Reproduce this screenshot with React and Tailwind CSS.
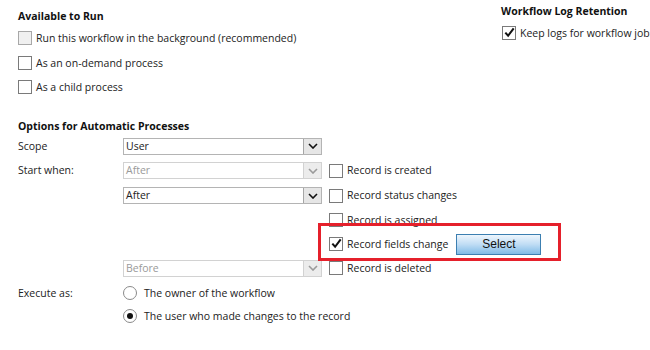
import React from "react";

const font = { fontFamily: '"Open Sans", "Noto Sans", sans-serif' };

function Check({ checked, disabled }) {
  return (
    <span
      className={`relative inline-block w-[14px] h-[14px] shrink-0 border ${
        disabled ? "border-[#a8a8a8] bg-[#f0f0f0]" : "border-[#7a7a7a] bg-white"
      }`}
    >
      {checked && (
        <svg viewBox="0 0 14 14" className="absolute left-[0px] top-[-1px] w-[13px] h-[13px]">
          <path d="M2.5 7.2 L5.5 10.5 L11.5 2.5" fill="none" stroke="#111" strokeWidth="2.2" />
        </svg>
      )}
    </span>
  );
}

function CheckRow({ label, checked, disabled, className = "" }) {
  return (
    <div className={`flex items-center gap-[4px] ${className}`}>
      <Check checked={checked} disabled={disabled} />
      <span className="text-[10.5px] text-[#222] leading-none whitespace-nowrap">{label}</span>
    </div>
  );
}

function Select({ value, disabled }) {
  return (
    <div
      className={`flex items-stretch w-[199px] h-[17px] border ${
        disabled ? "border-[#d2d2d2]" : "border-[#b4b4b4]"
      } bg-white`}
    >
      <span
        className={`flex-1 flex items-center pl-[2px] text-[10.5px] leading-none ${
          disabled ? "text-[#9a9a9a]" : "text-[#222]"
        }`}
      >
        {value}
      </span>
      <span
        className={`w-[18px] flex items-center justify-center border-l ${
          disabled ? "border-[#d2d2d2] bg-[#ececec]" : "border-[#a6a6a6] bg-[#e6e6e6]"
        }`}
      >
        <svg viewBox="0 0 10 6" className="w-[10px] h-[6px]">
          <path d="M1 1 L5 5 L9 1" fill="none" stroke={disabled ? "#9a9a9a" : "#111"} strokeWidth="1.6" />
        </svg>
      </span>
    </div>
  );
}

function Radio({ checked, label }) {
  return (
    <div className="flex items-center gap-[7px]">
      <span className="w-[14px] h-[14px] rounded-full border border-[#8a8a8a] bg-white flex items-center justify-center">
        {checked && <span className="w-[6px] h-[6px] rounded-full bg-[#111]" />}
      </span>
      <span className="text-[10.5px] text-[#222] leading-none whitespace-nowrap">{label}</span>
    </div>
  );
}

export default function App() {
  return (
    <div className="relative w-[650px] h-[350px] bg-white overflow-hidden" style={font}>
      <div className="flex">
        <div className="w-[501px] shrink-0 pl-[18px] pt-[8px]">
          <div className="text-[10.5px] font-bold text-[#111] leading-[16px]">Available to Run</div>
          <CheckRow className="mt-[7px]" label="Run this workflow in the background (recommended)" disabled />
          <CheckRow className="mt-[11px]" label="As an on-demand process" />
          <CheckRow className="mt-[10px]" label="As a child process" />
        </div>
        <div className="shrink-0 pt-[3px]">
          <div className="text-[10.5px] font-bold text-[#111] leading-[16px]">Workflow Log Retention</div>
          <CheckRow className="mt-[7px] ml-[1px]" label="Keep logs for workflow jobs" checked />
        </div>
      </div>

      <div className="pl-[18px] mt-[24px]">
        <div className="text-[10.5px] font-bold text-[#111] leading-[16px]">Options for Automatic Processes</div>
        <div className="flex flex-col">
          <div className="flex items-center h-[24px]">
            <span className="w-[105px] text-[10.5px] text-[#222] leading-none">Scope</span>
            <Select value="User" />
          </div>
          <div className="flex items-center h-[25px]">
            <span className="w-[105px] text-[10.5px] text-[#222] leading-none">Start when:</span>
            <Select value="After" disabled />
            <CheckRow className="ml-[7px]" label="Record is created" />
          </div>
          <div className="flex items-center h-[25px]">
            <span className="w-[105px]" />
            <Select value="After" />
            <CheckRow className="ml-[7px]" label="Record status changes" />
          </div>
          <div className="flex items-center h-[24px]">
            <span className="w-[311px]" />
            <CheckRow label="Record is assigned" />
          </div>
          <div className="flex items-center h-[24px]">
            <span className="w-[311px]" />
            <CheckRow label="Record fields change" checked />
            <button className="ml-[8px] w-[85px] h-[21px] border border-[#3c7fb1] bg-gradient-to-b from-[#eef6fd] via-[#bfdcf4] to-[#7fbbe6] text-[12px] text-[#111] leading-none" style={{ fontFamily: '"Liberation Sans", Arial, sans-serif' }}>
              Select
            </button>
          </div>
          <div className="flex items-center h-[24px]">
            <span className="w-[105px]" />
            <Select value="Before" disabled />
            <CheckRow className="ml-[7px]" label="Record is deleted" />
          </div>
        </div>
        <div className="mt-[6px] flex items-center">
          <span className="w-[105px] text-[10.5px] text-[#222] leading-none">Execute as:</span>
          <Radio label="The owner of the workflow" />
        </div>
        <div className="mt-[9px] flex items-center">
          <span className="w-[105px]" />
          <Radio label="The user who made changes to the record" checked />
        </div>
      </div>

      <div className="absolute left-[318px] top-[223px] w-[243px] h-[38px] border-[3px] border-[#e5202b]" />
    </div>
  );
}
